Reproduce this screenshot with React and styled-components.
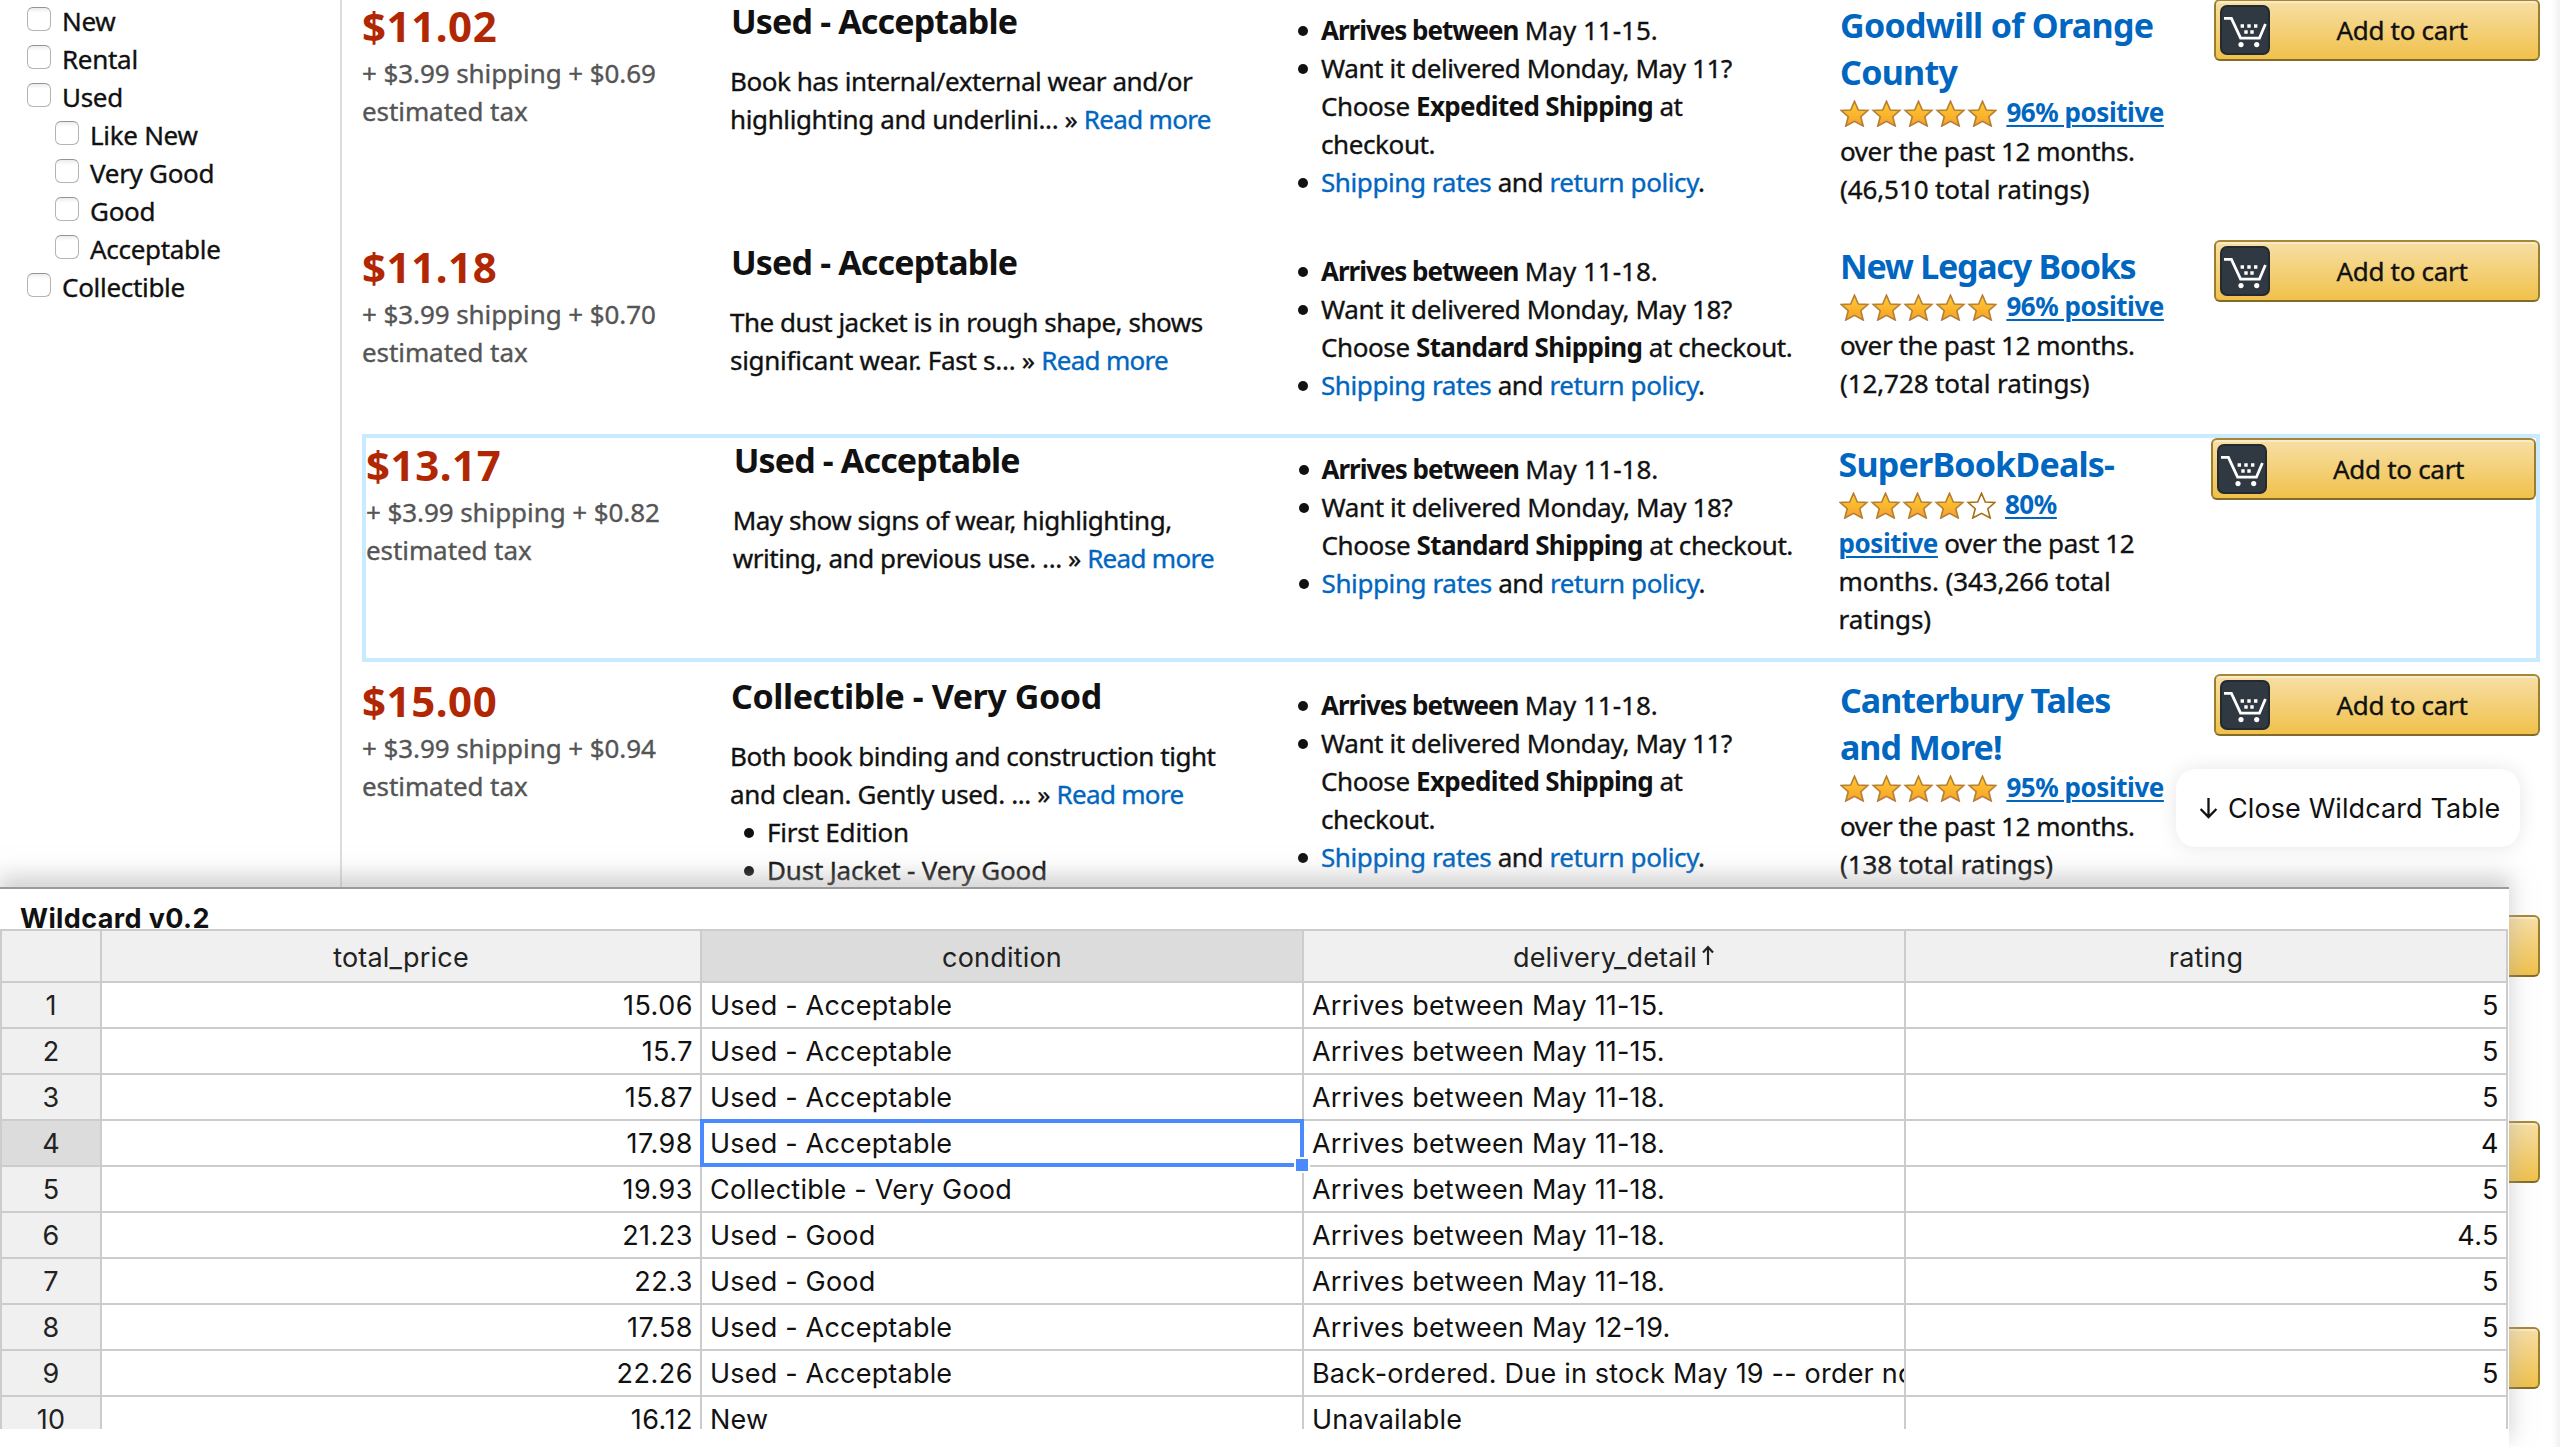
import React from "react";
import styled, { createGlobalStyle, css } from "styled-components";

const GlobalStyle = createGlobalStyle`
  *, *::before, *::after { box-sizing: border-box; }
  body { margin: 0; background: #fff; }
  p, h3, ul { margin: 0; padding: 0; }
`;

const storeFont = css`
  font-family: "Noto Sans", "Open Sans", sans-serif;
  -webkit-text-stroke-width: 0.35px;
`;
const sheetFont = css`
  font-family: Inter, Roboto, "Liberation Sans", sans-serif;
  -webkit-text-stroke-width: 0;
`;

const Page = styled.div`
  ${storeFont}
  position: relative;
  display: flex;
  height: 1447px;
  overflow: hidden;
  font-size: 26px;
  line-height: 38px;
  color: #111;
  background: linear-gradient(to left, #f1f1f1, #fff) right / 8px 100% no-repeat #fff;
`;

/* ---------- filters ---------- */

const Sidebar = styled.aside`
  flex: 0 0 342px;
  padding: 2px 0 0 27px;
  border-right: 2px solid #ddd;
`;

const Filter = styled.label`
  display: flex;
  gap: 11px;
  padding: 0 0 0 ${(p) => (p.$nested ? 28 : 0)}px;
  letter-spacing: -0.3px;
`;

const Checkbox = styled.span`
  width: 24px;
  height: 24px;
  margin-top: 5px;
  border: 1.5px solid #b4b4b4;
  border-top-color: #949494;
  border-radius: 6px;
  background: linear-gradient(#ececec, #fff 5px);
`;

/* ---------- offers ---------- */

const Offers = styled.main`
  flex: 1;
  margin-top: -1px;
  padding: 0 20px;
`;

const Offer = styled.section`
  display: grid;
  grid-template-columns: 368fr 568fr 542fr 374fr 326fr;
  align-items: start;
  height: ${(p) => p.$height}px;
  ${(p) => p.$active && css`
    border: 4px solid #c8ebff;
    margin-bottom: 12px;
  `}
`;

const Price = styled.div`
  font-size: 42px;
  line-height: 53px;
  font-weight: 700;
  letter-spacing: 0.55px;
  color: #b12704;
  -webkit-text-stroke-width: 0;
`;

const Shipping = styled.p`
  margin-top: 2px;
  letter-spacing: -0.08px;
  color: #555;
`;

const Condition = styled.h3`
  margin-bottom: 20px;
  padding: 1px 0 0 1px;
  font-size: 34px;
  line-height: 42px;
  letter-spacing: ${(p) => p.$tracking}px;
  white-space: nowrap;
  -webkit-text-stroke-width: 0;
`;

const Link = styled.a`
  color: #0066c0;
`;

const Description = styled.p`
  letter-spacing: -0.47px;
  white-space: nowrap;

  ${Link} { letter-spacing: -0.7px; }
`;

const DescriptionTail = styled.span`
  letter-spacing: ${(p) => p.$tracking}px;
`;

const BulletList = styled.ul`
  list-style: none;
  letter-spacing: -0.4px;
  white-space: nowrap;
  padding: ${(p) => (p.$inset ? "0 0 0 14px" : "12px 0 0")};
`;

const Bullet = styled.li`
  display: grid;
  grid-template-columns: 10px 1fr;
  column-gap: 13px;
  ${(p) => p.$loose && css`letter-spacing: -0.2px;`}

  &::before {
    content: "";
    width: 10px;
    height: 10px;
    margin-top: 15px;
    border-radius: 50%;
    background: #111;
  }
`;

const Strong = styled.b`
  letter-spacing: ${(p) => p.$tracking ?? -1.02}px;
  -webkit-text-stroke-width: 0;
`;

const DateRange = styled.span`
  letter-spacing: 0;
`;

const Seller = styled.div`
  padding: 3px 0 0 0;
  white-space: nowrap;
`;

const SellerName = styled.h3`
  font-size: 34px;
  line-height: 47px;
  letter-spacing: ${(p) => p.$tracking}px;
  color: #0066c0;
  -webkit-text-stroke-width: 0;
`;

const Rating = styled.p`
  margin-top: -3px;
  letter-spacing: -0.4px;
`;

const RatingLink = styled.a`
  font-weight: 700;
  letter-spacing: -0.45px;
  color: #0066c0;
  text-decoration: underline;
  text-decoration-thickness: 2px;
  text-underline-offset: 3px;
  -webkit-text-stroke-width: 0;
`;

const Tally = styled.span`
  letter-spacing: -0.1px;
`;

const StarStrip = styled.svg`
  margin: 0 3px 5px 0;
  vertical-align: -10px;
`;

const CartButton = styled.button`
  ${storeFont}
  display: flex;
  width: 100%;
  height: 62px;
  padding: 4px 0 0 4px;
  border: 2px solid;
  border-color: #a88734 #9c7e31 #846a29;
  border-radius: 6px;
  background: linear-gradient(#f7dfa5, #f0c14b);
  box-shadow: inset 0 2px 0 rgba(255, 255, 255, 0.4);
  font-size: 26px;
  line-height: 50px;
  letter-spacing: -0.3px;
  color: #111;
`;

const CartBadge = styled.svg`
  flex: none;
`;

const CartLabel = styled.span`
  flex: 1;
  padding-right: 4px;
  text-align: center;
`;

/* ---------- table panel ---------- */

const Panel = styled.section`
  ${sheetFont}
  position: absolute;
  left: 0;
  bottom: 0;
  width: 2509px;
  height: 560px;
  border-top: 2px solid #9b9b9b;
  background: #fff;
  box-shadow: 0 -10px 20px 2px rgba(170, 170, 170, 0.5);
  font-size: 27px;
  letter-spacing: 0.2px;
`;

const PanelTitle = styled.div`
  height: 40px;
  padding: 13px 0 0 20px;
  font-weight: 700;
  line-height: 33px;
  letter-spacing: 0.38px;
`;

const Sheet = styled.div`
  position: relative;
  display: grid;
  grid-template-columns: 102px 600px 602px 602px 602px;
  grid-template-rows: 54px;
  grid-auto-rows: 46px;
  width: 2508px;
  height: 500px;
  overflow: hidden;
`;

const Cell = styled.div`
  position: relative;
  padding: 1px 8px 0;
  border-right: 2px solid #ccc;
  border-bottom: 2px solid #ccc;
  line-height: 44px;
  white-space: nowrap;
  min-width: 0;
  overflow: ${(p) => (p.$open ? "visible" : "hidden")};
  ${(p) => p.$numeric && css`
    padding-right: 7px;
    text-align: right;
    letter-spacing: 0.5px;
  `}
`;

const HeadCell = styled(Cell)`
  border-top: 2px solid #ccc;
  background: ${(p) => (p.$selected ? "#dcdcdc" : "#f0f0f0")};
  color: #222;
  text-align: center;
  line-height: 51px;
  ${(p) => p.$corner && css`border-left: 2px solid #ccc;`}
`;

const IndexCell = styled(Cell)`
  border-left: 2px solid #ccc;
  background: ${(p) => (p.$selected ? "#dcdcdc" : "#f0f0f0")};
  color: #222;
  text-align: center;
`;

const HeadText = styled.span`
  position: relative;
  left: 1px;
`;

const SortArrow = styled.svg`
  position: absolute;
  left: calc(100% + 4px);
  top: 4px;
`;

const Selection = styled.div`
  position: absolute;
  z-index: 1;
  inset: -2px;
  border: 4px solid #4b89ff;

  &::after {
    content: "";
    position: absolute;
    right: -10px;
    bottom: -10px;
    width: 16px;
    height: 16px;
    border: 2px solid #fff;
    background: #4b89ff;
  }
`;

const CloseButton = styled.button`
  ${sheetFont}
  position: absolute;
  left: 2176px;
  top: 769px;
  display: flex;
  align-items: center;
  gap: 10px;
  width: 344px;
  height: 78px;
  padding: 0 0 0 23px;
  border: 0;
  border-radius: 20px;
  background: #fff;
  box-shadow: 0 0 20px rgba(0, 0, 0, 0.1);
  font-size: 27px;
  letter-spacing: 0.1px;
  color: #111;
  white-space: nowrap;
`;

/* ---------- drawings ---------- */

const STAR = "M14.5 1.2 L18.3 10 L27.8 10.5 L20.8 16.7 L23.2 26 L14.5 21.3 L5.8 26 L8.2 16.7 L1.2 10.5 L10.7 10 Z";

function Stars({ count }) {
  return (
    <StarStrip width="157" height="27" viewBox="0 0 157 27">
      <defs>
        <linearGradient id="star-fill" x1="0" y1="0" x2="0" y2="1">
          <stop offset="0" stopColor="#ffce31" />
          <stop offset="1" stopColor="#f6a02c" />
        </linearGradient>
      </defs>
      {[0, 1, 2, 3, 4].map((i) => (
        <path
          key={i}
          d={STAR}
          transform={`translate(${i * 32} 0)`}
          fill={i < count ? "url(#star-fill)" : "#fff"}
          stroke={i < count ? "#b57e33" : "#a66f12"}
          strokeWidth="1.6"
        />
      ))}
    </StarStrip>
  );
}

function AddToCart() {
  return (
    <CartButton>
      <CartBadge width="50" height="50" viewBox="0 0 50 50">
        <rect x="1" y="1" width="48" height="48" rx="6" fill="#303841" stroke="#232a31" strokeWidth="2" />
        <path d="M4 13.4 H11.4 L20.6 33.2 H39.4 L45.4 19" fill="none" stroke="#fff" strokeWidth="2.8" />
        <path
          d="M20.6 19.3h3.4v3.4h-3.4z M27.3 19.3h3.4v3.4h-3.4z M34 19.3h3.4v3.4h-3.4z M24.3 25.3h3.4v3.4h-3.4z M30.3 25.3h3.4v3.4h-3.4z"
          fill="#fff"
        />
        <circle cx="21" cy="39.6" r="2.6" fill="#fff" />
        <circle cx="36.7" cy="39.6" r="2.6" fill="#fff" />
      </CartBadge>
      <CartLabel>Add to cart</CartLabel>
    </CartButton>
  );
}

/* ---------- data ---------- */

const filters = [
  { label: "New" },
  { label: "Rental" },
  { label: "Used" },
  { label: "Like New", nested: true },
  { label: "Very Good", nested: true },
  { label: "Good", nested: true },
  { label: "Acceptable", nested: true },
  { label: "Collectible" },
];

const offers = [
  {
    height: 241,
    price: "$11.02",
    tax: "$0.69",
    condition: "Used - Acceptable",
    tracking: -0.85,
    text: ["Book has internal/external wear and/or", "highlighting and underlini... » "],
    tail: -0.38,
    dates: "May 11-15.",
    day: "May 11?",
    speed: "Expedited Shipping",
    wrap: true,
    seller: ["Goodwill of Orange", "County"],
    sellerTracking: -0.7,
    stars: 5,
    positive: "96% positive",
    after: [" ", "over the past 12 months."],
    tally: "(46,510 total ratings)",
  },
  {
    height: 194,
    price: "$11.18",
    tax: "$0.70",
    condition: "Used - Acceptable",
    tracking: -0.85,
    text: ["The dust jacket is in rough shape, shows", "significant wear. Fast s... » "],
    tail: -0.28,
    dates: "May 11-18.",
    day: "May 18?",
    speed: "Standard Shipping",
    seller: ["New Legacy Books"],
    sellerTracking: -1.25,
    stars: 5,
    positive: "96% positive",
    after: [" ", "over the past 12 months."],
    tally: "(12,728 total ratings)",
  },
  {
    height: 228,
    active: true,
    price: "$13.17",
    tax: "$0.82",
    condition: "Used - Acceptable",
    tracking: -0.85,
    text: ["May show signs of wear, highlighting,", "writing, and previous use. ... » "],
    tail: -0.44,
    dates: "May 11-18.",
    day: "May 18?",
    speed: "Standard Shipping",
    seller: ["SuperBookDeals-"],
    sellerTracking: -0.8,
    stars: 4,
    positive: ["80%", "positive"],
    after: [" over the past 12", "months. (343,266 total"],
    loose: true,
    tally: "ratings)",
  },
  {
    height: 241,
    price: "$15.00",
    tax: "$0.94",
    condition: "Collectible - Very Good",
    tracking: -0.42,
    text: ["Both book binding and construction tight", "and clean. Gently used. ... » "],
    tail: -0.38,
    notes: ["First Edition", "Dust Jacket - Very Good"],
    dates: "May 11-18.",
    day: "May 11?",
    speed: "Expedited Shipping",
    wrap: true,
    seller: ["Canterbury Tales", "and More!"],
    sellerTracking: -1,
    stars: 5,
    positive: "95% positive",
    after: [" ", "over the past 12 months."],
    tally: "(138 total ratings)",
  },
];

const rows = [
  ["15.06", "Used - Acceptable", "Arrives between May 11-15.", "5"],
  ["15.7", "Used - Acceptable", "Arrives between May 11-15.", "5"],
  ["15.87", "Used - Acceptable", "Arrives between May 11-18.", "5"],
  ["17.98", "Used - Acceptable", "Arrives between May 11-18.", "4"],
  ["19.93", "Collectible - Very Good", "Arrives between May 11-18.", "5"],
  ["21.23", "Used - Good", "Arrives between May 11-18.", "4.5"],
  ["22.3", "Used - Good", "Arrives between May 11-18.", "5"],
  ["17.58", "Used - Acceptable", "Arrives between May 12-19.", "5"],
  ["22.26", "Used - Acceptable", "Back-ordered. Due in stock May 19 -- order now", "5"],
  ["16.12", "New", "Unavailable", ""],
];

const SELECTED_ROW = 3;

function OfferRow({ offer: o }) {
  return (
    <Offer $height={o.height} $active={o.active}>
      <div>
        <Price>{o.price}</Price>
        <Shipping>
          + $3.99 shipping + {o.tax}
          <br />
          estimated tax
        </Shipping>
      </div>
      <div>
        <Condition $tracking={o.tracking}>{o.condition}</Condition>
        <Description>
          {o.text[0]}
          <br />
          <DescriptionTail $tracking={o.tail}>{o.text[1]}</DescriptionTail>
          <Link>Read more</Link>
        </Description>
        {o.notes && (
          <BulletList $inset>
            {o.notes.map((n) => (
              <Bullet key={n} $loose>{n}</Bullet>
            ))}
          </BulletList>
        )}
      </div>
      <BulletList>
        <Bullet>
          <span>
            <Strong>Arrives between</Strong> <DateRange>{o.dates}</DateRange>
          </span>
        </Bullet>
        <Bullet>
          <span>
            Want it delivered Monday, {o.day}
            <br />
            Choose <Strong $tracking={-0.65}>{o.speed}</Strong> at {o.wrap && <br />}
            checkout.
          </span>
        </Bullet>
        <Bullet>
          <span>
            <Link>Shipping rates</Link> and <Link>return policy</Link>.
          </span>
        </Bullet>
      </BulletList>
      <Seller>
        <SellerName $tracking={o.sellerTracking}>
          {o.seller[0]}
          {o.seller[1] && <br />}
          {o.seller[1]}
        </SellerName>
        <Rating>
          <Stars count={o.stars} />{" "}
          {Array.isArray(o.positive) ? (
            <RatingLink>
              {o.positive[0]}
              <br />
              {o.positive[1]}
            </RatingLink>
          ) : (
            <RatingLink>{o.positive}</RatingLink>
          )}
          {o.after[0]}
          <br />
          {o.loose ? <Tally>{o.after[1]}</Tally> : o.after[1]}
          <br />
          <Tally>{o.tally}</Tally>
        </Rating>
      </Seller>
      <AddToCart />
    </Offer>
  );
}

const CartOnlyOffer = styled(Offer)`
  & > :last-child { grid-column: 5; }
`;

export default function App() {
  return (
    <Page>
      <GlobalStyle />
      <Sidebar>
        {filters.map((f) => (
          <Filter key={f.label} $nested={f.nested}>
            <Checkbox />
            {f.label}
          </Filter>
        ))}
      </Sidebar>
      <Offers>
        {offers.map((o) => (
          <OfferRow key={o.price} offer={o} />
        ))}
        {[206, 206, 206].map((h, i) => (
          <CartOnlyOffer key={i} $height={h}>
            <AddToCart />
          </CartOnlyOffer>
        ))}
      </Offers>

      <CloseButton>
        <svg width="19" height="22" viewBox="0 0 19 22" fill="none" stroke="#111" strokeWidth="2.3">
          <path d="M9.5 1 V20 M1.6 12 L9.5 20 L17.4 12" />
        </svg>
        Close Wildcard Table
      </CloseButton>

      <Panel>
        <PanelTitle>Wildcard v0.2</PanelTitle>
        <Sheet>
          <HeadCell $corner />
          <HeadCell>total_price</HeadCell>
          <HeadCell $selected>condition</HeadCell>
          <HeadCell>
            <HeadText>
              delivery_detail
              <SortArrow width="14" height="21" viewBox="0 0 14 21" fill="none" stroke="#222" strokeWidth="2.2">
                <path d="M7 20 V2 M2 7.4 L7 2 L12 7.4" />
              </SortArrow>
            </HeadText>
          </HeadCell>
          <HeadCell>rating</HeadCell>
          {rows.map((r, i) => (
            <React.Fragment key={i}>
              <IndexCell $selected={i === SELECTED_ROW}>{i + 1}</IndexCell>
              <Cell $numeric>{r[0]}</Cell>
              <Cell $open={i === SELECTED_ROW}>
                {r[1]}
                {i === SELECTED_ROW && <Selection />}
              </Cell>
              <Cell>{r[2]}</Cell>
              <Cell $numeric>{r[3]}</Cell>
            </React.Fragment>
          ))}
        </Sheet>
      </Panel>
    </Page>
  );
}
